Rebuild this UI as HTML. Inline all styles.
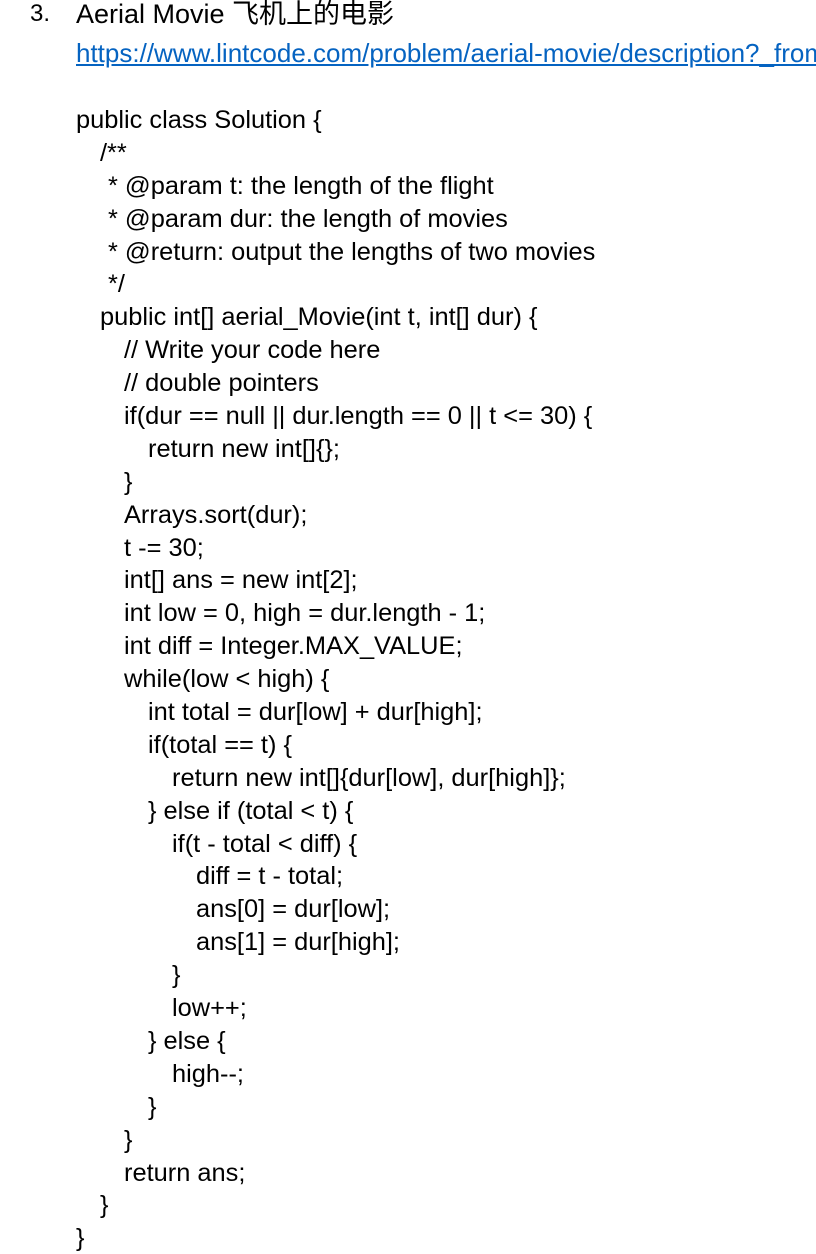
<!DOCTYPE html>
<html><head><meta charset="utf-8"><style>
html,body{margin:0;padding:0;background:#fff;width:816px;height:1254px;overflow:hidden;}
body{font-family:"Liberation Sans","Noto Sans CJK SC",sans-serif;color:#000;position:relative;}
.t{position:absolute;white-space:nowrap;font-size:25px;line-height:32.9px;}
.c{position:absolute;left:76px;top:104px;font-size:25.4px;line-height:32.9px;white-space:nowrap;}
.c div{height:32.9px}
.l1{padding-left:24px}.l2{padding-left:48px}.l3{padding-left:72px}.l4{padding-left:96px}.l5{padding-left:120px}
.s{padding-left:32px}
</style></head><body>
<div class="t" style="left:30px;top:-2px;font-size:24px">3.</div>
<div class="t" style="left:76px;top:-2px;font-size:27px">Aerial Movie 飞机上的电影</div>
<div class="t" style="left:76px;top:37px;color:#0563c1;text-decoration:underline;font-size:26px">https://www.lintcode.com/problem/aerial-movie/description?_from</div>
<div class="c"><div>public class Solution {</div><div class="l1">/**</div><div class="s">* @param t: the length of the flight</div><div class="s">* @param dur: the length of movies</div><div class="s">* @return: output the lengths of two movies</div><div class="s">*/</div><div class="l1">public int[] aerial_Movie(int t, int[] dur) {</div><div class="l2">// Write your code here</div><div class="l2">// double pointers</div><div class="l2">if(dur == null || dur.length == 0 || t &lt;= 30) {</div><div class="l3">return new int[]{};</div><div class="l2">}</div><div class="l2">Arrays.sort(dur);</div><div class="l2">t -= 30;</div><div class="l2">int[] ans = new int[2];</div><div class="l2">int low = 0, high = dur.length - 1;</div><div class="l2">int diff = Integer.MAX_VALUE;</div><div class="l2">while(low &lt; high) {</div><div class="l3">int total = dur[low] + dur[high];</div><div class="l3">if(total == t) {</div><div class="l4">return new int[]{dur[low], dur[high]};</div><div class="l3">} else if (total &lt; t) {</div><div class="l4">if(t - total &lt; diff) {</div><div class="l5">diff = t - total;</div><div class="l5">ans[0] = dur[low];</div><div class="l5">ans[1] = dur[high];</div><div class="l4">}</div><div class="l4">low++;</div><div class="l3">} else {</div><div class="l4">high--;</div><div class="l3">}</div><div class="l2">}</div><div class="l2">return ans;</div><div class="l1">}</div><div>}</div></div>
</body></html>
